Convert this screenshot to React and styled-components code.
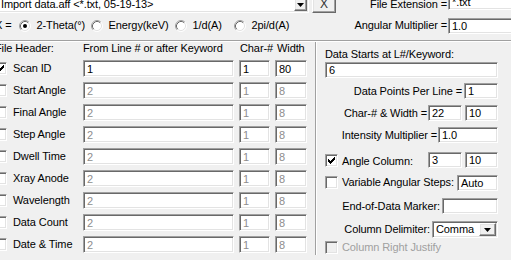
import styled, { createGlobalStyle } from 'styled-components';

const headerFields = [
  { label: 'Scan ID', checked: true, from: '1', char: '1', width: '80' },
  { label: 'Start Angle' },
  { label: 'Final Angle' },
  { label: 'Step Angle' },
  { label: 'Dwell Time' },
  { label: 'Xray Anode' },
  { label: 'Wavelength' },
  { label: 'Data Count' },
  { label: 'Date & Time' },
];

const axisOptions = [
  { label: '2-Theta(°)', checked: true, w: 72 },
  { label: 'Energy(keV)', w: 84 },
  { label: '1/d(A)', w: 59 },
  { label: '2pi/d(A)' },
];

const Arrow = () => (
  <svg width="7" height="4" viewBox="0 0 7 4">
    <path d="M0 0h7L3.5 4z" fill="#000" />
  </svg>
);

const Radio = ({ checked }) => (
  <RadioIcon width="12" height="12" viewBox="0 0 12 12">
    <circle cx="6" cy="6" r="5" fill="#fff" />
    <path d="M2.11 9.89A5.5 5.5 0 0 1 9.89 2.11" stroke="#a0a0a0" fill="none" />
    <path d="M9.89 2.11A5.5 5.5 0 0 1 2.11 9.89" stroke="#fff" fill="none" />
    <path d="M2.82 9.18A4.5 4.5 0 0 1 9.18 2.82" stroke="#696969" fill="none" />
    <path d="M9.18 2.82A4.5 4.5 0 0 1 2.82 9.18" stroke="#e3e3e3" fill="none" />
    {checked && <circle cx="6" cy="6" r="2" fill="#000" />}
  </RadioIcon>
);

const Check = ({ checked, disabled }) => (
  <CheckBox $disabled={disabled}>
    {checked && (
      <svg width="7" height="7" viewBox="0 0 7 7" shapeRendering="crispEdges">
        <path
          d="M6 0h1v1H6zM5 1h2v1H5zM0 2h1v1H0zM4 2h3v1H4zM0 3h2v1H0zM3 3h3v1H3zM0 4h5v1H0zM1 5h3v1H1zM2 6h1v1H2z"
          fill="#000"
        />
      </svg>
    )}
  </CheckBox>
);

const App = () => {
  return (
    <Window>
      <GlobalStyle />
      <Dialog>
        <TopRow $h={18} $align="flex-end">
          <Combo $w={312} $h={17} $ml={3}>
            <ComboText>Import data.aff &lt;*.txt, 05-19-13&gt;</ComboText>
            <DropButton $w={13}>
              <Arrow />
            </DropButton>
          </Combo>
          <CloseButton>X</CloseButton>
          <Spacer />
          <Label $self="flex-start" $mt={3}>
            File Extension =
          </Label>
          <Field $w={72} $ml={1} $mt={-1} $self="flex-start">
            *.txt
          </Field>
        </TopRow>

        <TopRow $h={17} $mt={4}>
          <Label $ml={1}>X =</Label>
          <RadioGroup>
            {axisOptions.map((o) => (
              <RadioItem key={o.label} $w={o.w}>
                <Radio checked={o.checked} />
                <span>{o.label}</span>
              </RadioItem>
            ))}
          </RadioGroup>
          <Spacer />
          <Label>Angular Multiplier =</Label>
          <Field $w={72} $ml={1}>
            1.0
          </Field>
        </TopRow>

        <Separator />

        <Main>
          <HeaderPanel>
            <HeaderGrid>
              <HeadCell $pl={1}>File Header:</HeadCell>
              <HeadCell>From Line # or after Keyword</HeadCell>
              <HeadCell $pl={1}>Char-#</HeadCell>
              <HeadCell $pl={2}>Width</HeadCell>
              {headerFields.map((f) => (
                <HeaderRow key={f.label} f={f} />
              ))}
            </HeaderGrid>
          </HeaderPanel>

          <DataPanel>
            <PanelRow $h={13} $mt={6}>
              <Label>Data Starts at L#/Keyword:</Label>
            </PanelRow>
            <PanelRow $mt={1}>
              <Field $w={173}>6</Field>
            </PanelRow>
            <PanelRow $mt={5} $end>
              <Label>Data Points Per Line =</Label>
              <Field $w={34} $ml={2}>
                1
              </Field>
            </PanelRow>
            <PanelRow $mt={6} $end>
              <Label>Char-# &amp; Width =</Label>
              <Field $w={34} $ml={1}>
                22
              </Field>
              <Field $w={33} $ml={3}>
                10
              </Field>
            </PanelRow>
            <PanelRow $mt={6} $end>
              <Label>Intensity Multiplier =</Label>
              <Field $w={60} $ml={1}>
                1.0
              </Field>
            </PanelRow>
            <PanelRow $mt={9}>
              <Check checked />
              <Label $ml={4} $mt={3}>
                Angle Column:
              </Label>
              <Spacer />
              <Field $w={34}>3</Field>
              <Field $w={33} $ml={3}>
                10
              </Field>
            </PanelRow>
            <PanelRow $mt={6}>
              <Check />
              <Label $ml={4}>Variable Angular Steps:</Label>
              <Spacer />
              <Field $w={41} $mt={2}>
                Auto
              </Field>
            </PanelRow>
            <PanelRow $mt={8} $end>
              <Label>End-of-Data Marker:</Label>
              <Field $w={56} $ml={2} />
            </PanelRow>
            <PanelRow $mt={7} $h={17} $end>
              <Label>Column Delimiter:</Label>
              <Combo $w={66} $h={17} $ml={2}>
                <ComboText>Comma</ComboText>
                <DropButton $w={17}>
                  <Arrow />
                </DropButton>
              </Combo>
            </PanelRow>
            <PanelRow $mt={3} $h={13}>
              <Check disabled />
              <Label $ml={4} $disabled>
                Column Right Justify
              </Label>
            </PanelRow>
          </DataPanel>
        </Main>
      </Dialog>
    </Window>
  );
};

const HeaderRow = ({ f }) => (
  <>
    <RowLabel>
      <Check checked={f.checked} />
      <span>{f.label}</span>
    </RowLabel>
    <Field $w={151} $h={17} $dim={!f.from}>
      {f.from || '2'}
    </Field>
    <Field $w={31} $h={17} $dim={!f.char}>
      {f.char || '1'}
    </Field>
    <Field $w={32} $h={17} $dim={!f.width}>
      {f.width || '8'}
    </Field>
  </>
);

const GlobalStyle = createGlobalStyle`
  html, body {
    margin: 0;
    padding: 0;
    background: #f0f0f0;
  }
  body {
    font-family: "Liberation Sans", Arial, sans-serif;
    font-size: 11px;
    letter-spacing: -0.1px;
    color: #000;
  }
`;

const Window = styled.div`
  width: 511px;
  height: 260px;
  overflow: hidden;
  background: #f0f0f0;
`;

const Dialog = styled.div`
  margin: -5px 0 0 -6px;
  width: 526px;
  line-height: 13px;
`;

const TopRow = styled.div`
  display: flex;
  align-items: ${(p) => p.$align || 'center'};
  height: ${(p) => p.$h}px;
  margin-top: ${(p) => p.$mt || 0}px;
`;

const Spacer = styled.span`
  flex: 1;
`;

const Label = styled.span`
  white-space: nowrap;
  align-self: ${(p) => p.$self || 'auto'};
  margin-left: ${(p) => p.$ml || 0}px;
  margin-top: ${(p) => p.$mt || 0}px;
  color: ${(p) => (p.$disabled ? '#a0a0a0' : '#000')};
`;

const sunken = `
  box-sizing: border-box;
  border: 1px solid;
  border-color: #a0a0a0 #fff #fff #a0a0a0;
  box-shadow: inset 1px 1px #696969, inset -1px -1px #e3e3e3;
`;

const raised = `
  box-sizing: border-box;
  border: 1px solid;
  border-color: #fff #696969 #696969 #fff;
  box-shadow: inset -1px -1px #a0a0a0, inset 1px 1px #e3e3e3;
  background: #f0f0f0;
`;

const Field = styled.div`
  ${sunken}
  flex-shrink: 0;
  align-self: ${(p) => p.$self || 'auto'};
  width: ${(p) => p.$w}px;
  height: ${(p) => p.$h || 16}px;
  margin-left: ${(p) => p.$ml || 0}px;
  margin-top: ${(p) => p.$mt || 0}px;
  padding: 1px 0 0 3px;
  display: flex;
  align-items: center;
  background: #fff;
  color: ${(p) => (p.$dim ? '#8d8d8d' : '#000')};
  white-space: nowrap;
  overflow: hidden;
`;

const Combo = styled.div`
  ${sunken}
  flex-shrink: 0;
  display: flex;
  width: ${(p) => p.$w}px;
  height: ${(p) => p.$h}px;
  margin-left: ${(p) => p.$ml || 0}px;
  padding: 1px;
  background: #fff;
`;

const ComboText = styled.span`
  flex: 1;
  display: flex;
  align-items: center;
  padding-left: 2px;
  white-space: nowrap;
  overflow: hidden;
`;

const DropButton = styled.span`
  ${raised}
  width: ${(p) => p.$w}px;
  display: flex;
  align-items: center;
  justify-content: center;
`;

const CloseButton = styled.span`
  ${raised}
  flex-shrink: 0;
  width: 24px;
  height: 22px;
  margin-left: 3px;
  padding-top: 4px;
  display: flex;
  align-items: center;
  justify-content: center;
  font-size: 12px;
  color: #333;
`;

const RadioGroup = styled.div`
  display: flex;
  align-items: center;
  margin-left: 7px;
`;

const RadioItem = styled.label`
  display: flex;
  align-items: center;
  gap: 6px;
  width: ${(p) => (p.$w ? `${p.$w}px` : 'auto')};
  white-space: nowrap;
`;

const RadioIcon = styled.svg`
  flex-shrink: 0;
  margin-top: 1px;
`;

const CheckBox = styled.span`
  ${sunken}
  flex-shrink: 0;
  width: 13px;
  height: 13px;
  display: flex;
  align-items: center;
  justify-content: center;
  background: ${(p) => (p.$disabled ? '#f0f0f0' : '#fff')};
`;

const Separator = styled.div`
  margin-top: 6px;
  height: 1px;
  background: #a0a0a0;
  border-bottom: 1px solid #fff;
`;

const Main = styled.div`
  display: flex;
  align-items: flex-start;
`;

const HeaderPanel = styled.div`
  width: 321px;
  flex-shrink: 0;
`;

const HeaderGrid = styled.div`
  display: grid;
  grid-template-columns: 84px 151px 31px 32px;
  grid-template-rows: 13px;
  grid-auto-rows: 17px;
  column-gap: 5px;
  row-gap: 5px;
`;

const HeadCell = styled.span`
  padding-left: ${(p) => p.$pl || 0}px;
  white-space: nowrap;
`;

const RowLabel = styled.div`
  display: flex;
  align-items: center;
  gap: 6px;
  white-space: nowrap;
`;

const DataPanel = styled.div`
  box-sizing: border-box;
  width: 205px;
  height: 213px;
  border-left: 1px solid #a0a0a0;
  box-shadow: inset 1px 0 #fff;
  padding: 0 22px 0 9px;
  display: flex;
  flex-direction: column;
`;

const PanelRow = styled.div`
  display: flex;
  align-items: center;
  justify-content: ${(p) => (p.$end ? 'flex-end' : 'flex-start')};
  height: ${(p) => p.$h || 16}px;
  margin-top: ${(p) => p.$mt || 0}px;
  flex-shrink: 0;
`;

export default App;
